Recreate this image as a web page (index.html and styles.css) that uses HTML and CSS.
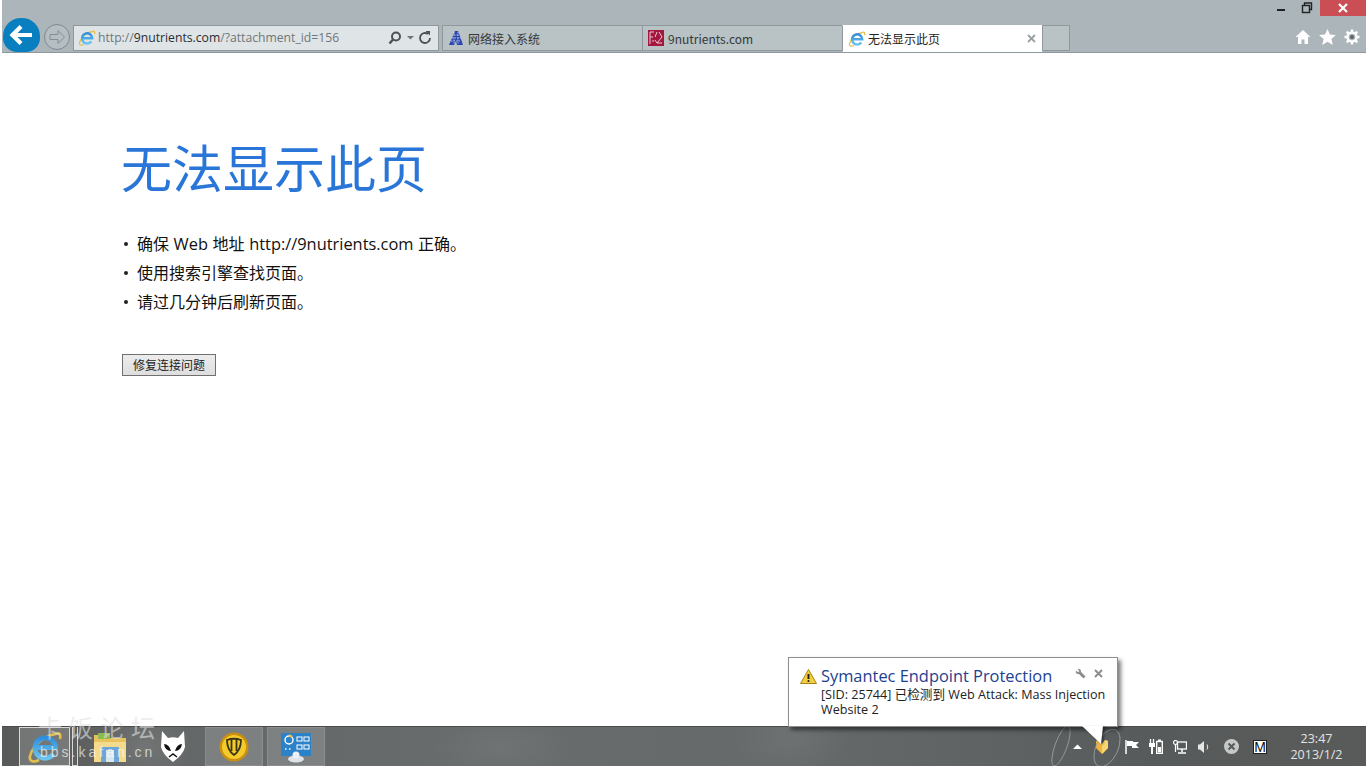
FILE: index.html
```html
<!DOCTYPE html>
<html lang="zh-CN">
<head>
<meta charset="utf-8">
<title>无法显示此页</title>
<link rel="stylesheet" href="styles.css">
</head>
<body>
<div class="screen">
  <svg class="defs" width="0" height="0">
    <defs>
      <linearGradient id="ieblue" x1="0" y1="0" x2="0" y2="1">
        <stop offset="0" stop-color="#2f8fdc"/>
        <stop offset="1" stop-color="#6cc3ee"/>
      </linearGradient>
      <symbol id="ie" viewBox="0 0 18 18">
        <path d="M14.500 2.500C9 3 3 8 1.500 13.500 1 16 3 17 6 15.500M14.500 2.500C16.500 1.500 17 3 16.500 5" fill="none" stroke="#e3bf4c" stroke-width="1.300"/>
        <path d="M4.600 9.300h9.600a5.100 5.100 0 1 0-1 3.200" fill="none" stroke="url(#ieblue)" stroke-width="2.500"/>
      </symbol>
    </defs>
  </svg>
  <header class="chrome">
    <div class="caption">
      <div class="winbtn"><span class="min"></span></div>
      <div class="winbtn">
        <svg width="12" height="12" viewBox="0 0 12 12"><path d="M3.500 3V1h7v6.500H8.500" fill="none" stroke="#222" stroke-width="1.400"/><rect x="1.500" y="3.500" width="7" height="7" fill="none" stroke="#222" stroke-width="1.400"/></svg>
      </div>
      <div class="winclose">
        <svg width="10" height="10" viewBox="0 0 10 10"><path d="M1 1l8 8M9 1l-8 8" stroke="#fff" stroke-width="2.200"/></svg>
      </div>
    </div>
    <div class="toolbar">
      <div class="back">
        <svg width="26" height="24" viewBox="0 0 26 24"><path d="M12 3.500L3.500 12l8.500 8.500M4 12h19" fill="none" stroke="#fff" stroke-width="4.200"/></svg>
      </div>
      <div class="forward">
        <svg width="18" height="16" viewBox="0 0 18 16"><path d="M10 1.500L16.500 8 10 14.500v-4H2v-5h8z" fill="none" stroke="#858e93" stroke-width="1"/></svg>
      </div>
      <div class="address">
        <svg class="ie" width="18" height="18" viewBox="0 0 18 18"><use href="#ie"/></svg>
        <div class="url"><span class="dim">http://</span><b>9nutrients.com</b><span class="dim">/?attachment_id=156</span></div>
        <svg class="addr-tool" width="46" height="16" viewBox="0 0 46 16">
          <circle cx="9" cy="6.500" r="4" fill="none" stroke="#4b5256" stroke-width="2"/>
          <path d="M6 9.500l-3.500 4" stroke="#4b5256" stroke-width="2.400"/>
          <path d="M20 6h7l-3.500 3.500z" fill="#6d7579"/>
          <path d="M43 8a5 5 0 1 1-2-4" fill="none" stroke="#4b5256" stroke-width="1.800"/>
          <path d="M38.500 1h4.500v4.500z" fill="#4b5256"/>
        </svg>
      </div>
      <div class="tabs">
        <div class="tab">
          <svg width="16" height="16" viewBox="0 0 16 16"><path d="M1 15L7 1h3l3 8 2 6H9L8 11l-2 4z" fill="#2c47ad"/><path d="M3 11h10M4 8h9M6 5h5M6 2v12M10 2v12" stroke="#c9d6ee" stroke-width=".8" stroke-dasharray="1.500 1"/></svg>
          <span>网络接入系统</span>
        </div>
        <div class="tab">
          <svg width="16" height="16" viewBox="0 0 16 16"><rect width="16" height="16" fill="#a4173f"/><path d="M2 2v12M2 2h4M2 7h3M4 11h2M9 2l-2 5M11 2l3 5-5 6h5M7 10l2 3" fill="none" stroke="#eec9d1" stroke-width="1"/></svg>
          <span>9nutrients.com</span>
        </div>
        <div class="tab active">
          <svg width="18" height="18" viewBox="0 0 18 18"><use href="#ie"/></svg>
          <span class="grow">无法显示此页</span>
          <svg class="tabx" width="9" height="9" viewBox="0 0 9 9"><path d="M1 1l7 7M8 1L1 8" stroke="#9aa0a3" stroke-width="1.800"/></svg>
        </div>
        <div class="tab newtab"></div>
      </div>
      <div class="tools">
        <svg width="16" height="16" viewBox="0 0 16 16"><path d="M8 1L.5 8H3v7h3.500v-4.500h3V15H13V8h2.500z" fill="#fff"/></svg>
        <svg width="17" height="16" viewBox="0 0 17 16"><path d="M8.500 0l2.400 5.500 6 .5-4.500 4 1.400 6-5.300-3.200L3.200 16l1.400-6L0 6l6-.5z" fill="#fff"/></svg>
        <svg width="16" height="16" viewBox="0 0 16 16"><circle cx="8" cy="8" r="4.500" fill="none" stroke="#fff" stroke-width="2.400"/><path d="M8 .5v3M8 12.500v3M.5 8h3M12.500 8h3M2.700 2.700l2.100 2.100M11.200 11.200l2.100 2.100M13.300 2.700l-2.100 2.100M4.800 11.200l-2.100 2.100" stroke="#fff" stroke-width="2.400"/><circle cx="8" cy="8" r="2" fill="#5a6468"/></svg>
      </div>
    </div>
  </header>

  <main class="page">
    <h1>无法显示此页</h1>
    <ul class="tips">
      <li>确保 <span class="latin">Web</span> 地址 <span class="latin">http://9nutrients.com</span> 正确。</li>
      <li>使用搜索引擎查找页面。</li>
      <li>请过几分钟后刷新页面。</li>
    </ul>
    <button class="fix" type="button">修复连接问题</button>
  </main>

  <footer class="taskbar">
    <div class="task-left">
      <div class="task pinned first">
        <svg width="36" height="36" viewBox="0 0 18 18"><use href="#ie"/></svg>
      </div>
      <div class="stack"></div>
      <div class="task plain folder">
        <svg width="34" height="32" viewBox="0 0 34 32"><path d="M1 4h12l3 3h17v24H1z" fill="#e8c25a"/><rect x="5" y="2" width="12" height="6" fill="#8dbb4f"/><rect x="1" y="11" width="32" height="20" fill="#f4da8c"/><rect x="8" y="16" width="18" height="15" fill="#6ba6d6"/><rect x="13" y="19" width="8" height="12" fill="#d8e6ee"/></svg>
      </div>
      <div class="task plain fox">
        <svg width="24" height="31" viewBox="0 0 24 31"><path d="M1 0l6 7q5-1.500 10 0l6-7 1 16q-2 8-12 15Q2 24 0 16z" fill="#fff"/><path d="M3 13q5 0 7 7-6 0-7-7zM21 13q-5 0-7 7 6 0 7-7z" fill="#111"/><path d="M8 26l4-3 4 3" fill="none" stroke="#111" stroke-width="1.500"/></svg>
      </div>
      <div class="task pinned shield-task">
        <svg width="30" height="30" viewBox="0 0 30 30"><circle cx="15" cy="15" r="14.500" fill="#c98f10"/><circle cx="15" cy="15" r="12" fill="#f5cb2c"/><path d="M8 8q7-2.500 14 0 0 10-7 15Q8 18 8 8z" fill="none" stroke="#3a3316" stroke-width="1.800"/><path d="M12.500 8v11M17.500 8v11" stroke="#3a3316" stroke-width="1.800"/></svg>
      </div>
      <div class="task pinned panel-task">
        <svg width="34" height="32" viewBox="0 0 34 32"><rect x="2" y="2" width="30" height="23" fill="#2c82c9"/><circle cx="10" cy="9" r="4" fill="none" stroke="#fff" stroke-width="1.400"/><path d="M10 4l3 2" stroke="#f4b942" stroke-width="2.400"/><path d="M6 18h1.500M10 18h1.500" stroke="#fff" stroke-width="1.500"/><rect x="18" y="6" width="5" height="4" fill="none" stroke="#fff"/><rect x="25" y="6" width="5" height="4" fill="none" stroke="#fff"/><rect x="18" y="14" width="5" height="4" fill="none" stroke="#fff"/><rect x="25" y="14" width="5" height="4" fill="none" stroke="#fff"/><ellipse cx="17" cy="28" rx="8" ry="3.500" fill="#dfe4e8"/><circle cx="17" cy="24" r="3.500" fill="#eef1f3"/></svg>
      </div>
    </div>
    <div class="tray">
      <svg class="ring" width="75" height="40" viewBox="0 0 75 40"><ellipse cx="11" cy="20" rx="6" ry="21" transform="rotate(20 11 20)" fill="none" stroke="#9a9f9e" stroke-width=".8"/><ellipse cx="57" cy="22" rx="11" ry="20" transform="rotate(25 57 22)" fill="none" stroke="#9a9f9e" stroke-width=".8"/></svg>
      <svg class="t-up" width="9" height="5" viewBox="0 0 9 5"><path d="M0 5l4.500-4.500L9 5z" fill="#fff"/></svg>
      <svg class="t-shield" width="12" height="15" viewBox="0 0 12 15"><path d="M0 2l3-1 3 4 3-4 3 1v7l-6 6-6-6z" fill="#ecb43c"/><path d="M6 5l3-4 3 1v7l-6 6z" fill="#f7d672"/></svg>
      <svg class="t-flag" width="14" height="14" viewBox="0 0 14 14"><path d="M1 0v14" stroke="#fff" stroke-width="1.500"/><path d="M2 1h6v1h6l-3 3 3 3H7V6H2z" fill="#fff"/></svg>
      <svg class="t-power" width="14" height="15" viewBox="0 0 14 15"><path d="M1.500 0v4M4.500 0v4" stroke="#fff" stroke-width="1.300"/><rect x="0" y="4" width="6" height="4" fill="#fff"/><path d="M3 8v7" stroke="#fff" stroke-width="2"/><rect x="7.700" y="2.500" width="5.600" height="12" fill="none" stroke="#fff" stroke-width="1.400"/><rect x="9" y="0.500" width="3" height="2" fill="#fff"/><rect x="9" y="8" width="3" height="5.500" fill="#fff"/></svg>
      <svg class="t-net" width="14" height="14" viewBox="0 0 14 14"><rect x="4.500" y="2" width="9" height="7" fill="none" stroke="#fff" stroke-width="1.300"/><path d="M9 9v3M5 13h8" stroke="#fff" stroke-width="1.500"/><circle cx="2.500" cy="2.500" r="2" fill="none" stroke="#fff" stroke-width="1.200"/><path d="M2.500 4.500V12" stroke="#fff" stroke-width="1.200"/></svg>
      <svg class="t-vol" width="12" height="14" viewBox="0 0 12 14"><path d="M0 4.500h2L6 1v12L2 9.500H0z" fill="#e6e8e8"/><path d="M9 4.500q1.500 2.500 0 5" fill="none" stroke="#e6e8e8"/></svg>
      <svg class="t-err" width="15" height="15" viewBox="0 0 15 15"><circle cx="7.500" cy="7.500" r="7.500" fill="#c6c8c8"/><path d="M4.500 4.500l6 6M10.500 4.500l-6 6" stroke="#555a5a" stroke-width="2"/></svg>
      <div class="ime">M</div>
      <div class="clock"><span>23:47</span><span>2013/1/2</span></div>
    </div>
    <div class="watermark"><span class="wm-cn">卡饭论坛</span><span class="wm-en">bbs.kafan.cn</span></div>
  </footer>

  <aside class="balloon">
    <div class="b-head">
      <svg width="17" height="15" viewBox="0 0 17 15"><path d="M8.500.5l8 14H.5z" fill="#f3cf3e" stroke="#a5841f"/><path d="M8.500 5v5" stroke="#222" stroke-width="2"/><circle cx="8.500" cy="12" r="1.100" fill="#222"/></svg>
      <span class="b-title">Symantec Endpoint Protection</span>
      <svg class="b-wrench" width="11" height="11" viewBox="0 0 11 11"><path d="M4.500 4.500L9.500 9.500" stroke="#8a8e90" stroke-width="3"/><path d="M.8 2.500L3 4.200 4.300 3 2.500.8Q5 .2 6 2.500 6.300 4 5 5.200 3.800 6.300 2.500 6 .2 5 .8 2.500z" fill="#8a8e90"/></svg>
      <svg class="b-x" width="9" height="9" viewBox="0 0 9 9"><path d="M1 1l7 7M8 1L1 8" stroke="#8a8e90" stroke-width="2"/></svg>
    </div>
    <p class="b-text">[SID: 25744] 已检测到 Web Attack: Mass Injection Website 2</p>
    <svg class="b-tail" width="22" height="20" viewBox="0 0 22 20"><path d="M0 0L19 18 21 0z" fill="#fff"/></svg>
  </aside>
</div>
</body>
</html>
```

FILE: styles.css
```css
* { box-sizing: border-box; }
html, body { margin: 0; padding: 0; height: 100%; overflow: hidden; background: #fff; }
body { font-family: "Liberation Sans", "Noto Sans CJK SC", sans-serif; }
.screen { position: relative; width: 1366px; height: 768px; display: flex; flex-direction: column; padding: 0 0 2px 2px; background: #fff; }

.chrome { height: 53px; flex: none; background: #abb5ba; display: flex; flex-direction: column; border-bottom: 1px solid #8f999d; }
.caption { height: 25px; display: flex; justify-content: flex-end; align-items: flex-start; }
.winbtn { width: 26px; height: 16px; display: flex; align-items: center; justify-content: center; }
.min { width: 8px; height: 2px; background: #222; margin-top: 4px; }
.winclose { width: 46px; height: 16px; background: #c94f55; display: flex; align-items: center; justify-content: center; }

.toolbar { height: 27px; display: flex; align-items: stretch; position: relative; }
.back { position: absolute; left: 1px; top: -7px; width: 37px; height: 34px; border-radius: 18px 18px 14px 14px; background: #0a7fc0; display: flex; align-items: center; justify-content: center; }
.forward { margin-left: 42px; margin-top: -1px; width: 26px; height: 26px; border-radius: 50%; border: 1px solid #7f898e; background: #b5bec2; display: flex; align-items: center; justify-content: center; flex: none; }
.address { margin-left: 3px; width: 366px; height: 26px; flex: none; display: flex; align-items: center; background: #dfe4e6; border: 1px solid #8f999d; padding: 0 5px 2px 4px; gap: 2px; }
.address svg { position: relative; top: 1px; }
.url { flex: 1; font: 12.200px "Open Sans", "Liberation Sans", sans-serif; color: #6f777b; white-space: nowrap; }
.url b { font-weight: 400; color: #2a2f33; }
.tabs { margin-left: 3px; display: flex; height: 27px; flex: none; }
.tab { width: 201px; height: 26px; display: flex; align-items: center; gap: 4px; padding: 0 5px; background: #b9c2c5; border: 1px solid #8f999d; margin-right: -1px; font: 12px "Noto Sans CJK SC", "Open Sans", sans-serif; color: #33393c; white-space: nowrap; }
.tab.active { width: 201px; height: 27px; gap: 2px; padding-right: 6px; background: #fff; border-color: #fff #8f999d #fff #8f999d; color: #222; }
.tab.newtab { width: 28px; }
.grow { flex: 1; }
.tools { margin-left: auto; width: 71px; padding: 1px 6px 5px 0; display: flex; align-items: center; justify-content: flex-end; gap: 8px; }

.page { flex: 1; padding: 83px 0 0 120px; color: #111; }
h1 { margin: 0 0 0 -1px; font: 400 51px/60px "Noto Sans CJK SC", sans-serif; color: #2a76d8; }
.tips { list-style: none; margin: 33px 0 0; padding: 0; font: 16px/29px "Noto Sans CJK SC", sans-serif; }
.tips li { height: 29px; padding-left: 15px; position: relative; white-space: nowrap; }
.tips li::before { content: ""; position: absolute; left: 2px; top: 13px; width: 4px; height: 4px; border-radius: 50%; background: #222; }
.latin { font: 16.400px/29px "Open Sans", sans-serif; margin: 0 1px; }
.fix { display: block; margin-top: 38px; width: 94px; height: 22px; padding: 0; border: 1px solid #707070; background: linear-gradient(#ececec, #dedede); font: 12px/20px "Noto Sans CJK SC", sans-serif; color: #222; }

.taskbar { position: relative; height: 40px; flex: none; display: flex; justify-content: space-between; border-top: 1px solid #4a4c4c;
  background:
    radial-gradient(ellipse 70px 30px at 500px 20px, rgba(255,255,255,.05), transparent),
    radial-gradient(ellipse 60px 40px at 790px 10px, rgba(255,255,255,.06), transparent),
    radial-gradient(ellipse 50px 40px at 140px 20px, rgba(255,255,255,.1), transparent),
    linear-gradient(90deg, #585a59 0%, #646767 12%, #686c6d 35%, #666a6b 55%, #5f6364 72%, #575a5a 85%, #595b5a 100%); }
.task-left { display: flex; align-items: stretch; }
.task { height: 39px; display: flex; align-items: center; justify-content: center; }
.task.pinned { border: 1px solid #8c8e8e; background: rgba(255,255,255,.16); }
.task.first { margin-left: 17px; width: 51px; border-color: #d8d8d8; }
.stack { width: 6px; margin-left: 2px; border: 1px solid #d8d8d8; border-top: 0; height: 39px; }
.task.plain { background: none; }
.folder { width: 60px; margin-left: 2px; }
.fox { width: 65px; }
.shield-task { width: 58px; }
.panel-task { width: 58px; margin-left: 4px; }
.tray { position: relative; display: flex; align-items: center; width: 293px; }
.tray > svg { flex: none; }
.ring { position: absolute; left: -23px; top: -1px; }
.t-up { margin-right: 14px; }
.t-shield { margin-right: 17px; }
.t-flag, .t-power { margin-right: 10px; }
.t-net { margin-right: 11px; }
.t-vol { margin-right: 14px; }
.t-err { margin-right: 14px; }
.ime { width: 14px; height: 14px; background: #fff; border: 1px solid #222; color: #111; font: 14px/12px "Liberation Sans", sans-serif; text-align: center; }
.clock { width: 99px; flex: none; display: flex; flex-direction: column; align-items: center; color: #e2e4e4; font: 12.500px/16px "Open Sans", sans-serif; }
.watermark { position: absolute; left: 36px; top: -13px; display: flex; flex-direction: column; pointer-events: none; }
.wm-cn { font: 24px/26px "Noto Sans CJK SC", sans-serif; letter-spacing: 7px; color: rgba(226,226,226,.6); }
.wm-en { font: 14px/14px "Liberation Sans", sans-serif; letter-spacing: 3px; color: rgba(255,255,255,.65); margin-top: 5px; margin-left: 2px; }

.balloon { position: absolute; left: 788px; top: 657px; width: 330px; height: 70px; background: #fff; border: 1px solid #8e8e8e; box-shadow: 3px 3px 4px rgba(0,0,0,.5); padding: 8px 10px 0 11px; }
.b-head { display: flex; align-items: center; height: 20px; gap: 4px; }
.b-title { font: 16.400px/20px "Open Sans", sans-serif; color: #1c3f8f; flex: 1; white-space: nowrap; }
.b-wrench { margin-top: -5px; margin-right: 4px; }
.b-x { margin-top: -5px; margin-right: 4px; }
.b-text { margin: 1px 0 0 21px; font: 12.600px/15px "Open Sans", "Noto Sans CJK SC", sans-serif; color: #222; width: 292px; }
.b-tail { position: absolute; left: 293px; top: 68px; filter: drop-shadow(2px 1px 1px rgba(0,0,0,.45)); }
.defs { position: absolute; }
```
